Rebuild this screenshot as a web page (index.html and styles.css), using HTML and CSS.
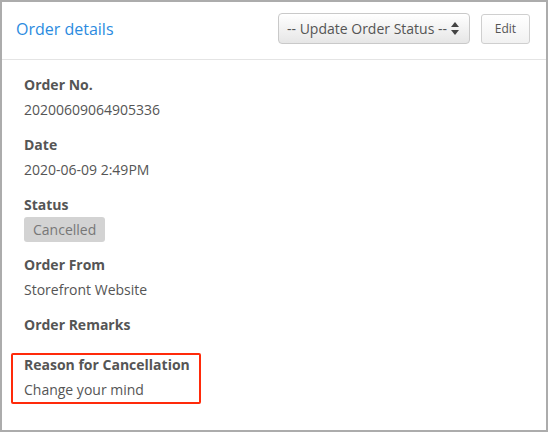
FILE: index.html
```html
<!DOCTYPE html>
<html lang="en">
  <head>
    <meta charset="UTF-8" />
    <meta name="viewport" content="width=device-width, initial-scale=1.0" />
    <title>Order details</title>
    <link rel="stylesheet" href="styles.css">
  </head>
  <body>
    <div class="panel">
      <div class="panel-header">
        <h2 class="panel-title">Order details</h2>
        <div class="panel-actions">
          <div class="status-select">
            <select name="orderStatus">
              <option value="">-- Update Order Status --</option>
              <option value="processing">Processing</option>
              <option value="shipped">Shipped</option>
              <option value="completed">Completed</option>
            </select>
            <svg class="select-arrows" width="8" height="13" viewBox="0 0 8 13">
              <path d="M4 0 L8 5 L0 5 Z" fill="#444" />
              <path d="M0 8 L8 8 L4 13 Z" fill="#444" />
            </svg>
          </div>
          <button type="button" class="btn">Edit</button>
        </div>
      </div>

      <div class="panel-body">
        <div class="field">
          <div class="field-label">Order No.</div>
          <div class="field-value">20200609064905336</div>
        </div>
        <div class="field">
          <div class="field-label">Date</div>
          <div class="field-value">2020-06-09 2:49PM</div>
        </div>
        <div class="field field-status">
          <div class="field-label">Status</div>
          <div class="badge">Cancelled</div>
        </div>
        <div class="field">
          <div class="field-label">Order From</div>
          <div class="field-value">Storefront Website</div>
        </div>
        <div class="field">
          <div class="field-label">Order Remarks</div>
          <div class="field-value"></div>
        </div>
        <div class="field highlight">
          <div class="field-label">Reason for Cancellation</div>
          <div class="field-value">Change your mind</div>
        </div>
      </div>
    </div>
  </body>
</html>
```

FILE: styles.css
```css
/* Bestelldetails Panel */
html, body {
    margin: 0;
    padding: 0;
}

body {
    font-family: "Open Sans", Arial, sans-serif;
    font-size: 14px;
    color: #555;
    background: #fff;
}

.panel {
    box-sizing: border-box;
    width: 548px;
    height: 432px;
    border: 2px solid #acacac;
    background: #fff;
}

.panel-header {
    display: flex;
    align-items: center;
    justify-content: space-between;
    padding: 11px 16px 15px 14px;
    border-bottom: 1px solid #e4e4e4;
}

.panel-title {
    margin: 0;
    font-size: 16px;
    font-weight: normal;
    color: #2b8be0;
}

.panel-actions {
    display: flex;
    align-items: center;
    gap: 11px;
}

.status-select {
    position: relative;
}

.status-select select {
    appearance: none;
    -webkit-appearance: none;
    box-sizing: border-box;
    width: 192px;
    height: 31px;
    padding: 0 20px 0 8px;
    font-family: inherit;
    font-size: 14px;
    color: #555;
    border: 1px solid #c9c9c9;
    border-radius: 4px;
    background: linear-gradient(#ffffff, #e6e6e6);
    box-shadow: inset 0 1px 0 #fff;
}

.select-arrows {
    position: absolute;
    right: 11px;
    top: 9px;
    pointer-events: none;
}

.btn {
    box-sizing: border-box;
    width: 49px;
    height: 30px;
    font-family: inherit;
    font-size: 12px;
    color: #555;
    border: 1px solid #cfcfcf;
    border-radius: 3px;
    background: linear-gradient(#ffffff, #f1f1f1);
    cursor: pointer;
}

.panel-body {
    padding: 15px 22px;
}

/* Flex, damit leere Werte ihren Abstand behalten */
.field {
    display: flex;
    flex-direction: column;
    align-items: flex-start;
    margin-bottom: 15px;
}

.field-label {
    line-height: 20px;
    margin-bottom: 5px;
    font-weight: bold;
}

.field-value {
    line-height: 20px;
}

.field-status {
    margin-bottom: 13px;
}

.badge {
    margin-top: -3px;
    height: 25px;
    line-height: 25px;
    padding: 0 9px;
    border-radius: 3px;
    background: #d3d3d3;
    color: #777;
}

/* roter Rahmen um den Stornierungsgrund */
.highlight {
    position: relative;
}

.highlight::after {
    content: "";
    position: absolute;
    left: -13px;
    top: -2px;
    width: 190px;
    height: 51px;
    box-sizing: border-box;
    border: 2px solid #ff2a0a;
    border-radius: 2px;
}
```
